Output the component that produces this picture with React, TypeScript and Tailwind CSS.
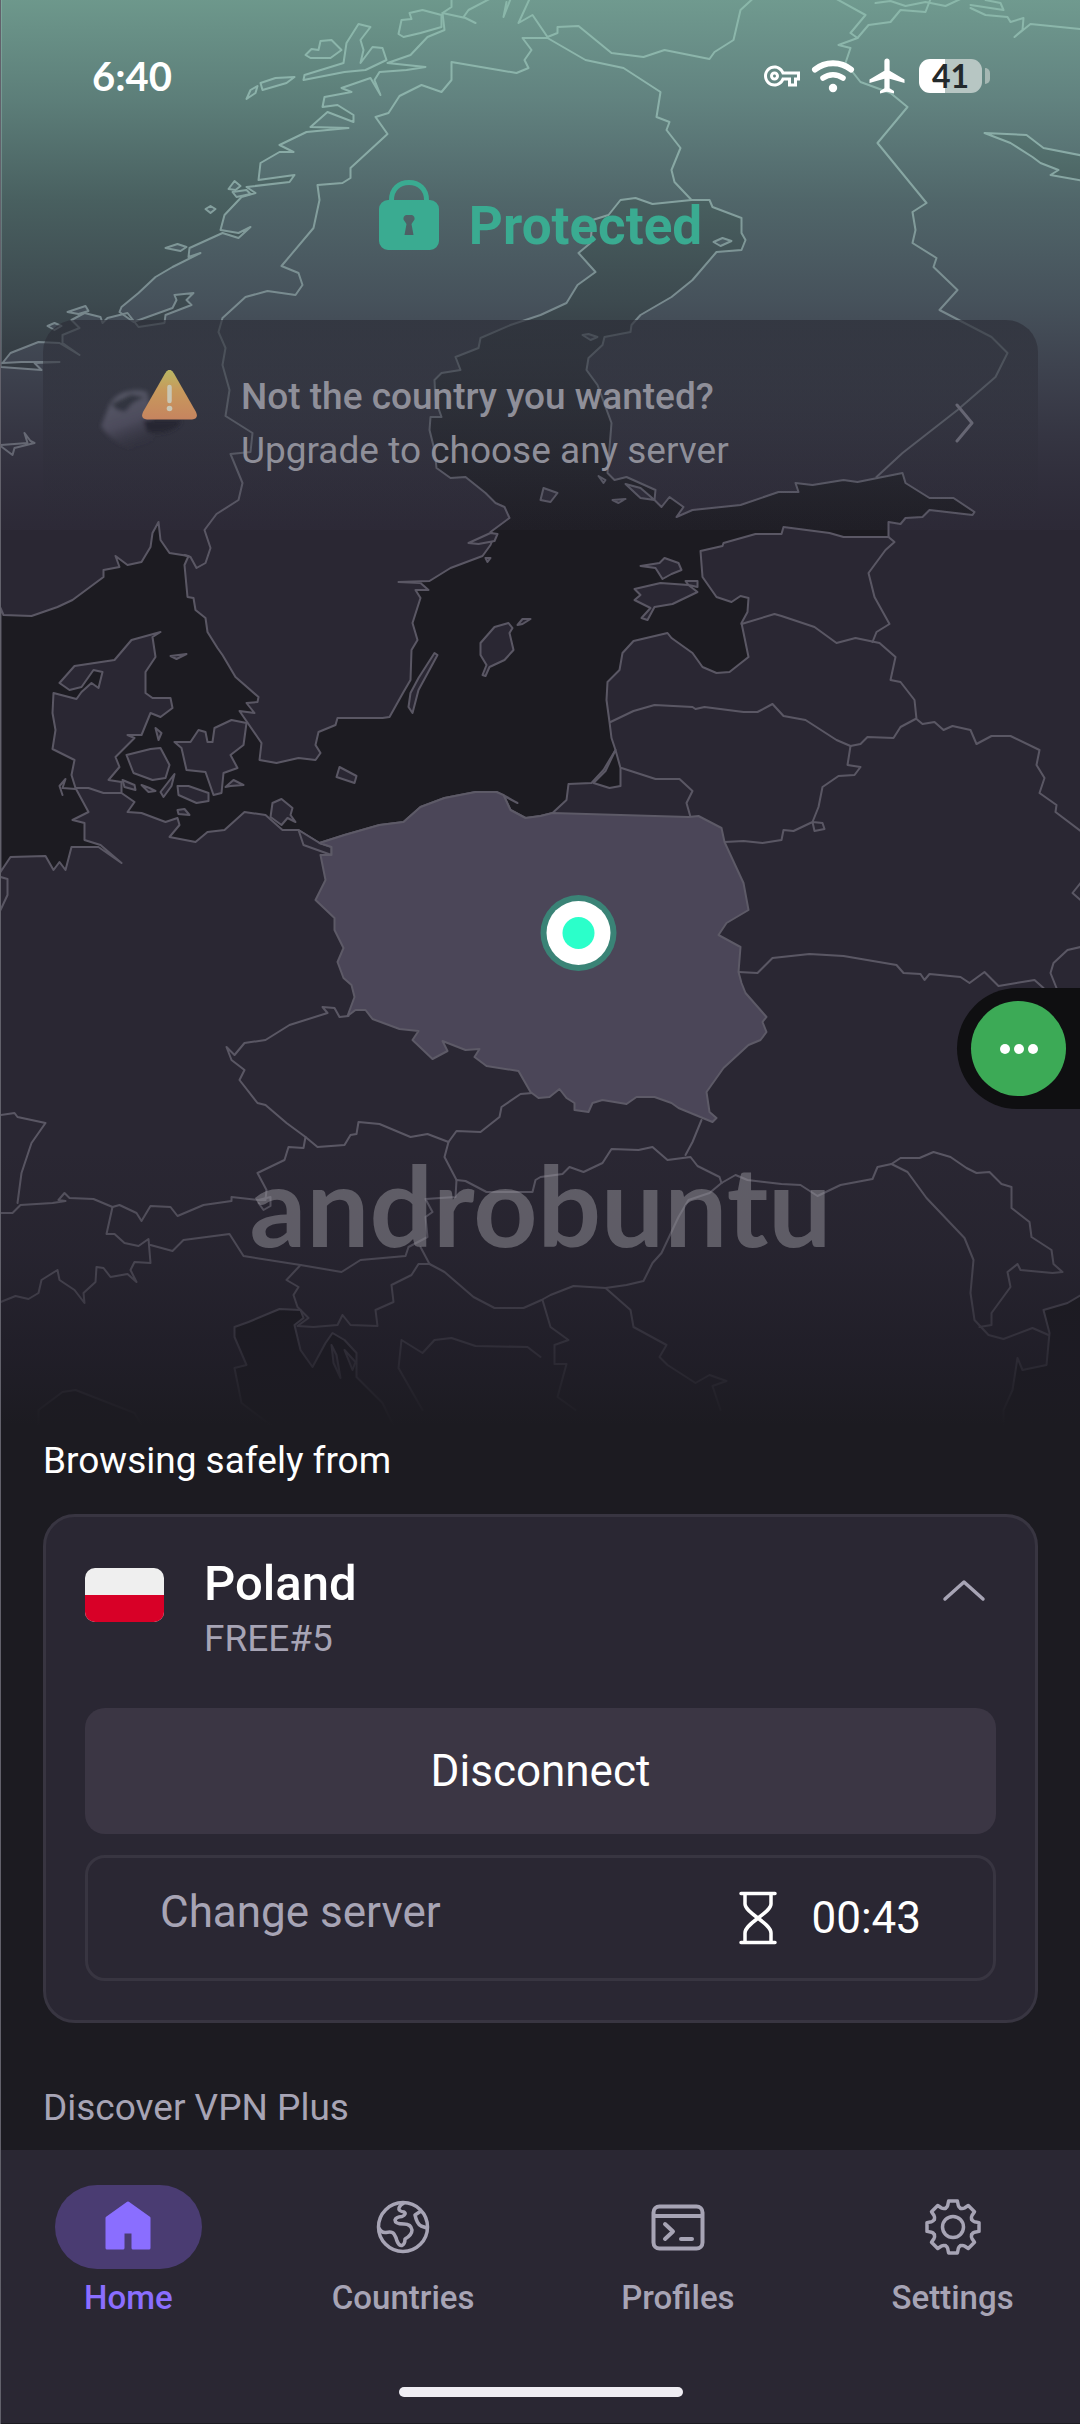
import type { ReactNode } from 'react';
import { MdAirplanemodeActive, MdOutlineVpnKey } from 'react-icons/md';

// Water bodies are painted over the land colour, islands go back on top of them
const seas = [
    // Norwegian Sea
    '0,-4 451,-4 451,7 442,13 444,30 427,37 410,55 387,63 425,67 406,70 379,72 374,80 380,95 370,78 341,88 351,92 324,97 322,107 337,105 353,115 353,122 327,112 310,127 348,128 306,132 279,145 293,152 279,152 260,163 258,180 294,175 289,182 246,187 255,193 241,197 224,215 220,230 238,233 250,227 238,238 222,233 189,248 188,257 200,253 172,267 155,277 138,293 121,307 119,312 133,322 172,308 176,300 174,295 193,293 186,300 191,305 165,315 164,323 138,327 127,313 107,318 102,323 100,317 84,313 71,320 79,328 62,335 62,343 79,355 59,343 38,342 10,353 2,363 21,362 59,362 34,363 41,370 0,367',
    // Skagerrak, the Baltic and its gulfs
    '0,608 3,615 31,616 57,607 72,600 103,577 103,570 119,567 115,556 127,565 141,562 150,547 152,533 158,522 160,540 169,553 188,556 184,565 187,597 193,598 195,610 205,618 207,632 217,648 222,655 235,677 258,697 257,702 246,703 254,713 239,711 261,743 259,760 276,763 298,758 315,760 320,753 315,745 318,732 335,725 337,718 382,718 389,717 403,692 410,680 411,650 417,640 412,623 420,598 415,590 428,590 420,583 398,582 429,581 450,568 482,556 490,545 494,535 490,532 509,518 504,507 495,503 485,493 465,477 450,478 436,468 434,450 429,430 430,417 441,417 435,400 434,380 441,373 460,370 455,357 478,348 480,338 510,325 540,315 566,303 577,285 595,272 578,253 590,243 592,220 608,215 620,200 635,198 652,204 691,200 709,200 712,207 741,218 741,233 745,240 741,250 716,252 692,280 671,297 640,315 631,325 630,332 604,337 602,345 588,358 586,370 597,385 611,423 607,473 614,480 626,477 655,490 654,500 661,507 669,497 683,507 676,517 692,510 740,505 778,492 798,492 795,483 812,485 843,480 857,482 902,473 905,483 929,498 953,498 974,512 972,515 929,510 922,517 905,518 900,524 888,522 888,537 843,537 829,533 783,527 781,534 755,534 723,543 722,546 700,551 702,577 716,597 731,602 740,596 748,598 747,612 741,623 748,657 729,672 716,673 702,667 692,653 671,638 667,633 633,641 622,653 619,670 607,682 606,700 609,722 611,738 615,750 603,770 591,783 568,784 566,800 552,813 540,816 525,818 510,810 503,795 517,803 496,792 475,792 444,798 420,807 403,822 379,825 344,835 319,843 298,830 282,830 265,815 244,812 224,830 207,832 195,842 169,837 179,825 177,818 165,822 141,813 127,812 134,802 121,793 121,782 108,780 119,767 115,757 134,738 127,735 141,735 150,713 160,717 172,708 170,698 152,698 145,693 145,672 155,657 152,637 160,632 131,640 114,660 74,666 59,683 69,690 81,687 93,670 102,672 98,688 91,683 81,692 76,699 53,693 52,713 55,730 52,749 74,760 71,775 75,788 88,812 72,820 84,823 84,840 100,845 121,863 98,847 71,847 65,870 59,862 53,870 45,856 10,857 0,872',
    // White Sea
    '984,133 1026,135 1043,148 1084,156 1084,181 1050,175 1058,170 1040,163 1032,157 1010,143',
    // Curonian Lagoon
    '615,750 620,768 620,786 609,788 593,783 605,771',
    // Black Sea
    '1084,1293 1067,1303 1043,1310 1049,1333 1046,1365 1022,1370 1017,1358 1012,1390 1003,1410 1003,1440 1084,1440',
    // Adriatic
    '234,1327 248,1322 279,1309 300,1310 303,1318 294,1325 300,1350 312,1367 325,1343 332,1333 344,1340 356,1353 356,1377 382,1403 400,1440 290,1440 241,1403 234,1368 246,1365 234,1337',
    '38,1440 38,1410 62,1392 75,1390 134,1413 150,1440',
];

const islands = [
    '370,27 358,24 346,43 343,63 304,75 303,80 344,72 365,70 386,60 382,48 372,47 360,63 363,50 360,40',
    '305,55 311,49 318,50 320,41 331,40 341,50 330,58 310,58',
    '401,20 411,19 409,13 422,10 441,15 441,27 420,33 403,37 398,34',
    '260,83 275,78 294,77 286,83 262,90',
    '246,99 250,90 257,86 255,93',
    '228,189 234,181 240,186 235,190',
    '232,192 246,190 250,194 236,197',
    '205,209 210,206 215,209 210,213',
    '165,248 177,244 186,247 180,251',
    '67,312 85,306 88,311 78,314',
    '47,326 54,323 61,326 54,330',
    '174,742 190,742 198,730 205,732 207,742 212,742 214,728 231,720 246,723 243,745 230,755 237,768 223,773 221,793 213,795 205,772 186,770 181,748',
    '126,755 150,749 160,748 169,765 165,778 152,780 133,773',
    '177,786 188,786 208,793 208,801 196,803 178,795',
    '141,785 149,788 155,791 148,792',
    '174,774 171,786 163,797 160,792',
    '122,780 134,785 135,790 124,787',
    '155,728 161,733 158,740',
    '170,656 186,654 176,659',
    '225,787 233,780 243,785 230,786',
    '177,810 184,809 189,815 178,814',
    '339,767 356,776 354,783 336,777',
    '272,803 281,799 292,808 290,815 295,822 287,818 281,825 270,817',
    '434,653 437,655 418,690 412,713 408,707 410,693 418,678',
    '480,643 494,627 508,623 512,628 509,633 513,650 504,660 489,667 485,676 482,675 486,665 480,655',
    '517,625 522,619 530,619 522,624',
    '468,543 490,533 497,534 494,541 478,544',
    '485,558 490,558 487,562',
    '298,830 319,843 331,847 331,855 303,845',
    '640,566 659,563 664,558 678,563 681,570 671,574 662,579 655,568',
    '634,589 660,583 688,585 697,592 672,604 654,607 647,620 641,618 650,608 634,600 640,595',
    '685,581 697,581 697,587 688,585',
    '540,500 543,488 557,493 550,502',
    '582,335 588,334 597,337 590,340',
    '598,476 605,480 603,483',
    '713,242 722,238 731,241 720,246',
    '612,500 625,499 618,503',
    '625,484 640,488 654,500 640,498',
    '331,1345 336,1355 340,1378 333,1363',
    '344,1350 355,1362 352,1370',
];

const poland =
    '319,843 344,835 379,825 403,822 420,807 444,798 475,792 496,792 503,795 510,810 525,818 540,816 552,813 688,817 698,816 721,828 724,842 743,883 748,910 726,923 718,935 740,947 738,972 741,983 745,993 766,1017 762,1022 766,1032 760,1040 748,1045 723,1068 706,1092 709,1112 716,1118 712,1122 678,1108 671,1103 654,1097 636,1097 626,1104 602,1100 592,1103 588,1112 574,1110 574,1103 566,1098 559,1089 549,1097 538,1098 530,1092 518,1071 486,1066 474,1057 479,1049 465,1050 442,1041 447,1051 432,1059 412,1040 418,1031 399,1029 372,1019 365,1010 355,1010 347,1016 354,997 351,985 343,978 337,962 343,948 334,930 334,918 315,900 325,880 320,855 331,855 331,847';

const borders = [
    // Nordics
    '442,13 465,18 475,23 463,17 468,10 489,-1',
    '510,-1 503,17 506,2',
    '529,-1 518,23 532,15 547,37',
    '547,38 522,38 531,50 524,60 528,68 516,73 498,70 451,62 451,80 441,92 421,85 399,96 388,113 375,117 387,134 350,168 350,178 342,183 317,185 319,200 313,228 281,266 298,273 302,285 295,295 267,291 245,297 222,318 218,332 225,348 222,365 229,390 225,416 252,433 250,452 230,454 242,483 238,500 216,514 204,530 210,548 205,563 196,568 190,557 184,555',
    '547,37 557,33 557,27 578,26 611,53 643,57 664,50 709,59 714,52 733,40 740,10 752,-1',
    '547,38 585,60 623,68 660,92 656,117 669,122 666,130 680,148 671,170 674,182 691,200',
    '836,-1 865,15 850,33 857,38 838,45 850,48 845,63 860,82 890,93 907,107 877,143 926,203 912,212 915,230 912,243 936,258 933,267 957,290 939,310 991,337 1007,353 995,377 957,410 902,453 876,477',
    '857,38 868,25 890,22 900,10 925,12 930,-1',
    '875,3 890,1 905,6 925,2 945,6 960,-1',
    '970,5 1003,10 1000,3 985,0',
    '970,8 985,15 1007,17 1010,22 1023,18 1022,30 1014,37 1030,24 1080,29',
    '0,445 27,443 24,433 30,441 34,443 14,448 12,455 0,446',
    // Baltics and Belarus
    '888,537 894,542 885,550 868,573 874,597 889,624 876,632 872,642',
    '741,624 774,614 781,616 814,627 836,643 855,638 879,643 895,657 890,680 900,682 914,700 916,719 922,724 934,722 943,730 952,726 970,730 976,744 991,736 1010,736 1039,750 1036,765 1044,778 1039,793 1056,805 1055,812 1080,831',
    '610,722 633,711 654,705 692,707 695,709 704,707 743,712 757,712 772,704 783,716 805,720 836,740 850,746 860,744 867,737 893,738 900,727 915,719',
    '621,768 655,779 679,779 692,791 686,803 690,817',
    '850,746 847,765 860,767 854,775 838,776 822,787 818,807 812,822 822,823 824,829 814,831 812,822 793,831 783,830 781,840 762,843 743,841 724,842',
    '738,972 757,973 772,958 809,954 843,956 896,965 903,973 920,974 924,980 929,974 960,977 969,983 984,972 998,986 1034,980 1043,988',
    '1080,947 1067,950 1053,963 1050,973 1056,988',
    '1080,883 1072,893 1080,900',
    '75,788 88,788 103,793 121,793',
    '62,795 59,786 65,779 62,788 75,789',
    '0,877 7,879 7,895 0,910',
    // Central Europe
    '348,1016 339,1017 334,1008 322,1007 327,1013 289,1025 265,1040 244,1043 234,1055 226,1047 231,1060 244,1070 239,1080 257,1103 265,1105 286,1123 305,1137 317,1147 344,1145 350,1135 356,1134 358,1122 379,1124 410,1137 427,1134 448,1142 456,1131 480,1132 499,1117 501,1107 520,1094 532,1093',
    '305,1137 303,1148 288,1147 284,1160 257,1173 266,1190 265,1200 258,1200 231,1197 231,1201 203,1205 177,1216 170,1207 150,1206 141,1221 136,1213 119,1205 112,1207 93,1199 69,1198 64,1193 58,1200 65,1201 52,1203 20,1205 12,1213 0,1213',
    '0,1115 14,1113 17,1117 45,1123 31,1143 21,1173 17,1203',
    '112,1207 106,1234 114,1234 124,1243 138,1246 148,1239 150,1263 134,1262 130,1270 136,1282 127,1274 110,1277 103,1268 96,1267 95,1282 83,1293 84,1303 74,1290 59,1280 57,1270 41,1280 38,1293 28,1299 15,1296 0,1302',
    '150,1245 172,1251 183,1240 229,1234 243,1256 300,1265 341,1272 360,1260 405,1256 408,1247 427,1237 425,1217 432,1212 425,1199 455,1197 456,1180 444,1157 448,1142',
    '258,1200 270,1197 270,1206 263,1210 258,1203',
    '456,1180 465,1181 486,1192 532,1192 535,1180 540,1177 562,1174 569,1167 583,1172 602,1163 611,1149 638,1150 652,1147 667,1160 690,1157 697,1166 719,1177 721,1183',
    '701,1120 692,1142 685,1155',
    // Romania, Moldova and the Balkans
    '721,1183 735,1175 747,1180 781,1184 800,1185 817,1196 840,1185 872,1179 877,1167 891,1164',
    '891,1164 900,1158 919,1158 933,1152 950,1157 966,1168 976,1173 989,1172 1001,1184 1011,1187 1011,1208 1029,1222 1031,1237 1051,1250 1053,1264 1062,1272 1052,1273 1020,1270 1017,1264 1007,1272 1010,1287 991,1313 991,1325 979,1327',
    '891,1164 907,1172 926,1198 964,1238 973,1260 970,1293 974,1320 988,1335 1003,1339 1032,1328 1048,1335',
    '721,1183 709,1193 688,1200 678,1217 661,1253 652,1263 643,1281 626,1285 605,1288 573,1286 550,1295 541,1300 523,1308 494,1308 473,1297 444,1272 429,1264 420,1247',
    '605,1288 630,1310 633,1327 666,1345 659,1357 667,1365 695,1383 709,1375 726,1381 712,1386 720,1410',
    '542,1300 550,1327 568,1340 554,1345 554,1364 566,1364 557,1397 575,1410',
    '300,1265 286,1280 298,1287 293,1295 297,1307 308,1318 297,1326 313,1327 337,1325 342,1315 350,1325 377,1326 375,1310 393,1302 391,1285 411,1275 418,1264 429,1264',
    '422,1410 398,1368 401,1340 422,1353 434,1340 451,1338 475,1346 527,1347 540,1357',
];

function EuropeMap() {
    return (
        <svg
            viewBox="0 0 1080 1440"
            preserveAspectRatio="xMidYMin slice"
            className="absolute inset-0 h-full w-full"
            aria-hidden="true"
        >
            <defs>
                <linearGradient id="outline" gradientUnits="userSpaceOnUse" x1="0" y1="0" x2="0" y2="520">
                    <stop offset="0" stopColor="#bccac6" />
                    <stop offset="0.5" stopColor="#7a8285" />
                    <stop offset="1" stopColor="#5a5764" />
                </linearGradient>
                <linearGradient id="glow" x1="0" y1="0" x2="0" y2="1">
                    <stop offset="0" stopColor="#7fb3a3" stopOpacity="0.82" />
                    <stop offset="0.19" stopColor="#7fb3a8" stopOpacity="0.65" />
                    <stop offset="0.38" stopColor="#7fb3ac" stopOpacity="0.45" />
                    <stop offset="0.57" stopColor="#7fa8ac" stopOpacity="0.33" />
                    <stop offset="0.76" stopColor="#7f98a8" stopOpacity="0.18" />
                    <stop offset="1" stopColor="#4a4660" stopOpacity="0.08" />
                </linearGradient>
                <linearGradient id="fade" x1="0" y1="0" x2="0" y2="1">
                    <stop offset="0" stopColor="#1c1b21" stopOpacity="0" />
                    <stop offset="0.35" stopColor="#1d1b24" stopOpacity="0.25" />
                    <stop offset="0.7" stopColor="#1d1b24" stopOpacity="0.72" />
                    <stop offset="0.95" stopColor="#1c1b21" stopOpacity="1" />
                </linearGradient>
            </defs>
            <rect width="1080" height="1440" fill="#2a2733" />
            <g stroke="url(#outline)" strokeWidth="2" strokeLinejoin="round" strokeLinecap="round" fill="none">
                {seas.map((points) => (
                    <polygon key={points} points={points} fill="#1c1b21" />
                ))}
                {islands.map((points) => (
                    <polygon key={points} points={points} fill="#2a2733" />
                ))}
                {borders.map((points) => (
                    <polyline key={points} points={points} />
                ))}
                <polygon points={poland} fill="#4b4658" stroke="#5d5a67" />
            </g>
            <rect width="1080" height="530" fill="url(#glow)" />
            <rect y="1150" width="1080" height="290" fill="url(#fade)" />
            {/* Server pin */}
            <circle cx="578" cy="933" r="38" fill="#3a8376" />
            <circle cx="578" cy="933" r="32" fill="#fff" />
            <circle cx="578" cy="933" r="16" fill="#2bffca" />
        </svg>
    );
}

function StatusBar() {
    return (
        <div className="flex h-[48px] items-center justify-between pr-[90px] pl-[91px] text-white">
            <span className="font-['Lato',sans-serif] text-[40px] leading-[48px] font-bold">6:40</span>
            <div className="flex items-center gap-[11px]">
                <MdOutlineVpnKey className="size-[36px]" />
                <svg viewBox="0 0 44 34" className="h-[34px] w-[44px]" fill="none" stroke="currentColor" strokeLinecap="round">
                    <path d="M4 10.500C14 2 30 2 40 10.500" strokeWidth="6" />
                    <path d="M12 19C18 14.500 26 14.500 32 19" strokeWidth="5.500" />
                    <circle cx="22" cy="29" r="4.200" fill="currentColor" stroke="none" />
                </svg>
                <MdAirplanemodeActive className="size-[42px]" />
                <div className="flex items-center gap-[3px]">
                    <div className="flex h-[34px] w-[63px] items-center justify-center rounded-[11px] bg-linear-to-r from-white from-41% to-[#b7c6c3] to-41%">
                        <span className="font-['Lato',sans-serif] text-[32px] leading-[34px] font-bold text-[#23292b]">41</span>
                    </div>
                    <div className="h-[16px] w-[5px] rounded-r-full bg-[#a5b7b3]" />
                </div>
            </div>
        </div>
    );
}

function ProtectedStatus() {
    return (
        <div className="mt-[80px] flex items-end justify-center gap-[30px] text-[#3aab91]">
            <svg viewBox="0 0 60 70" className="h-[70px] w-[60px]">
                <path d="M12.500 24V20C12.500 9 20 2.500 30 2.500S47.500 9 47.500 20V24" fill="none" stroke="currentColor" strokeWidth="5" />
                <path
                    fillRule="evenodd"
                    fill="currentColor"
                    d="M9 20H51A9 9 0 0 1 60 29V61A9 9 0 0 1 51 70H9A9 9 0 0 1 0 61V29A9 9 0 0 1 9 20ZM27 35Q24 36 24.500 39.500L27.500 44 25.500 55H34.500L32.500 44 35.500 39.500Q36 36 33 35Z"
                />
            </svg>
            <h1 className="text-[53px] leading-[48px] font-bold">Protected</h1>
        </div>
    );
}

function UpgradeBanner() {
    return (
        <button
            type="button"
            className="mx-[42px] mt-[70px] flex items-start gap-[44px] rounded-t-[32px] bg-linear-to-b from-[#2b2c36]/65 to-[#2b2a36]/0 pt-[50px] pr-[64px] pb-[52px] pl-[54px] text-left text-[37px] leading-[54px] text-[#8f8f99]"
        >
            <svg viewBox="0 0 100 90" className="h-[90px] w-[100px] shrink-0">
                <defs>
                    <linearGradient id="warn" x1="0" y1="0" x2="0" y2="1">
                        <stop offset="0" stopColor="#b9b763" />
                        <stop offset="0.4" stopColor="#c79a5c" />
                        <stop offset="1" stopColor="#c6845f" />
                    </linearGradient>
                    <linearGradient id="globe" x1="0" y1="0" x2="0.3" y2="1">
                        <stop offset="0" stopColor="#6c6f7e" stopOpacity="0.7" />
                        <stop offset="0.6" stopColor="#565467" stopOpacity="0.7" />
                        <stop offset="1" stopColor="#3a3846" stopOpacity="0" />
                    </linearGradient>
                    <filter id="soft">
                        <feGaussianBlur stdDeviation="2" />
                    </filter>
                </defs>
                <g filter="url(#soft)">
                    <path d="M12 36C18 22 36 18 50 22L56 50 56 86C36 84 14 72 4 56Z" fill="url(#globe)" />
                    <path d="M14 34L34 24 48 27 36 33 28 42 20 40Z" fill="#33343f" />
                    <path d="M46 50H84C84 58 66 66 50 62Z" fill="#272632" />
                </g>
                <path
                    d="M68 3.500Q72.500-4 77 3.500L99 42Q102 49 95 49.500H50Q43 49 46 42Z"
                    fill="url(#warn)"
                />
                <path d="M72.500 17V31" stroke="#c9c6b4" strokeWidth="4.500" strokeLinecap="round" />
                <circle cx="72.500" cy="38.500" r="2.800" fill="#c9c6b4" />
            </svg>
            <span className="flex-1">
                <span className="block font-medium">Not the country you wanted?</span>
                <span className="block">Upgrade to choose any server</span>
            </span>
            <svg viewBox="0 0 20 40" className="mt-[33px] h-[40px] w-[20px] self-start" fill="none" stroke="#666673" strokeWidth="3" strokeLinecap="round" strokeLinejoin="round">
                <path d="M3 2L18 20 3 38" />
            </svg>
        </button>
    );
}

function ConnectionCard() {
    return (
        <div className="mx-[42px] mt-8 rounded-[32px] border-3 border-[#383541] bg-[#2a2733] p-[39px]">
            <div className="flex items-start">
                <div className="mt-[12px] h-[54px] w-[79px] overflow-hidden rounded-[10px] bg-[#efefef]">
                    <div className="mt-[27px] h-[27px] bg-[#d80027]" />
                </div>
                <div className="ml-[40px] flex-1">
                    <h2 className="text-[49px] leading-[56px] font-medium text-white">Poland</h2>
                    <p className="text-[37px] leading-[54px] text-[#a7a4b5]">FREE#5</p>
                </div>
                <button type="button" aria-label="Collapse" className="mt-[22px] mr-[10px]">
                    <svg viewBox="0 0 44 24" className="h-[24px] w-[44px]" fill="none" stroke="#a7a4b5" strokeWidth="3.500" strokeLinecap="round" strokeLinejoin="round">
                        <path d="M3 21L22 4 41 21" />
                    </svg>
                </button>
            </div>
            <button type="button" className="mt-[42px] h-[126px] w-full rounded-[20px] bg-[#3b3644] text-[44px] text-white">
                Disconnect
            </button>
            <button
                type="button"
                className="mt-[21px] flex h-[126px] w-full items-center justify-between rounded-[20px] border-3 border-[#383541] px-[72px] text-[44px] leading-[48px]"
            >
                <span className="pb-3 text-[#a7a4b5]">Change server</span>
                <span className="flex items-center gap-[34px] text-white">
                    <svg viewBox="0 0 38 54" className="h-[54px] w-[38px]" fill="none" stroke="currentColor" strokeWidth="3.500" strokeLinecap="round" strokeLinejoin="round">
                        <path d="M2 2.500H36M2 51.500H36" />
                        <path d="M6 3V13C6 22 32 32 32 42V51M32 3V13C32 22 6 32 6 42V51" />
                    </svg>
                    00:43
                </span>
            </button>
        </div>
    );
}

function HomeIcon() {
    return (
        <path
            d="M28 4L49 19V49H33V33H23V49H7V19Z"
            fill="currentColor"
            stroke="currentColor"
            strokeWidth="3"
            strokeLinejoin="round"
        />
    );
}

function GlobeIcon() {
    return (
        <g fill="none" stroke="currentColor" strokeWidth="3.500" strokeLinejoin="round">
            <circle cx="28" cy="28" r="24.500" />
            <path d="M4 29Q6 34 11 33.500 17 32 19 35 21 38 22 42 24 47 27 46.500 30 45 30 40 37 36 37 31 36 25 29 25 20 25 20 21 21 18 27 17.500 32 15 29 13 23 12 24 9 25 6 29 4" />
            <path d="M46 12L40 16Q42 25 46 27L52 29" />
        </g>
    );
}

function ProfilesIcon() {
    return (
        <g fill="none" stroke="currentColor" strokeWidth="4" strokeLinecap="round" strokeLinejoin="round">
            <rect x="3.500" y="7.500" width="49" height="42" rx="6" />
            <path d="M4 17H52M15 25L23 32.500 15 40M31 40H42" />
        </g>
    );
}

// One tooth of the gear, turned eight times round the centre
const tooth = 'M-7.700-18.600C-6.200-19.500-5.600-20.300-5.300-21.500L-4.400-26H4.400L5.300-21.500C5.600-20.300 6.200-19.500 7.700-18.600';

function GearIcon() {
    return (
        <g transform="translate(28 28)" fill="none" stroke="currentColor" strokeWidth="3.500" strokeLinecap="round" strokeLinejoin="round">
            {[0, 45, 90, 135, 180, 225, 270, 315].map((angle) => (
                <path key={angle} d={tooth} transform={`rotate(${angle})`} />
            ))}
            <circle r="10.500" />
        </g>
    );
}

const tabs: { label: string; icon: ReactNode; active?: boolean }[] = [
    { label: 'Home', icon: <HomeIcon />, active: true },
    { label: 'Countries', icon: <GlobeIcon /> },
    { label: 'Profiles', icon: <ProfilesIcon /> },
    { label: 'Settings', icon: <GearIcon /> },
];

function BottomNav() {
    return (
        <nav className="mt-[21px] bg-[#2a2733] pt-[35px] pb-[26px]">
            <div className="grid grid-cols-4 gap-[20px]">
                {tabs.map((tab) => (
                    <a
                        key={tab.label}
                        href="#"
                        aria-current={tab.active ? 'page' : undefined}
                        className={`flex flex-col items-center gap-2 ${tab.active ? 'text-[#8a6eff]' : 'text-[#a7a4b5]'}`}
                    >
                        <span className={`flex h-[84px] w-[147px] items-center justify-center rounded-full ${tab.active ? 'bg-[#4a3c72]' : ''}`}>
                            <svg viewBox="0 0 56 56" className="size-[56px]">
                                {tab.icon}
                            </svg>
                        </span>
                        <span className="text-[33px] leading-[42px] font-medium">{tab.label}</span>
                    </a>
                ))}
            </div>
            <div className="mx-auto mt-[68px] h-[10px] w-[284px] rounded-full bg-[#efedf3]" />
        </nav>
    );
}

export default function App() {
    return (
        <div className="relative flex min-h-screen flex-col border-l border-[#62616b] bg-[#1c1b21] font-['Roboto',sans-serif]">
            <section className="relative flex h-[1440px] flex-col">
                <EuropeMap />
                <div className="relative flex flex-1 flex-col pt-[52px]">
                    <StatusBar />
                    <ProtectedStatus />
                    <UpgradeBanner />
                    <p className="mt-auto mb-[182px] text-center font-['Lato',sans-serif] text-[112px] leading-[108px] font-bold text-[#96939b]/50">
                        androbuntu
                    </p>
                </div>
            </section>

            <main>
                <p className="px-[42px] text-[37px] leading-[42px] text-white">Browsing safely from</p>
                <ConnectionCard />
                <p className="mt-[64px] px-[42px] text-[37px] leading-[42px] text-[#a7a4b5]">Discover VPN Plus</p>
            </main>

            <BottomNav />

            {/* Floating assistive button docked to the screen edge */}
            <div className="absolute top-[988px] right-0 flex h-[121px] w-[123px] items-center justify-center rounded-l-full bg-[#0f0f11]">
                <button type="button" aria-label="More" className="flex size-[95px] items-center justify-center gap-[4px] rounded-full bg-[#3caa56]">
                    <span className="size-[10px] rounded-full bg-white" />
                    <span className="size-[10px] rounded-full bg-white" />
                    <span className="size-[10px] rounded-full bg-white" />
                </button>
            </div>
        </div>
    );
}
